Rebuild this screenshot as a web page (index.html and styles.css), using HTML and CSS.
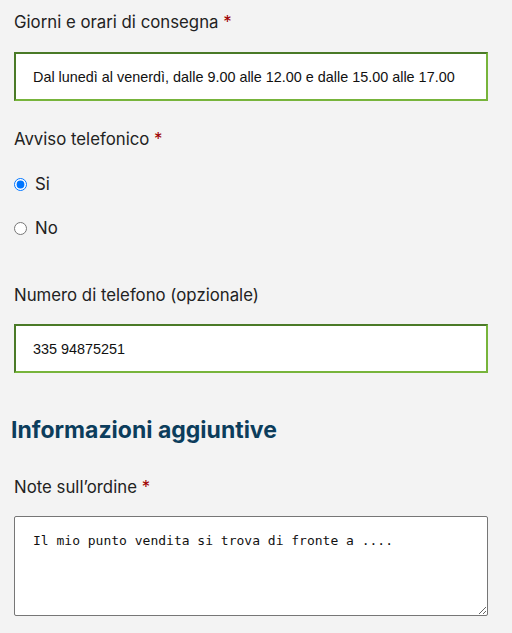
FILE: index.html
```html
<!DOCTYPE html>
<html lang="it">
<head>
<meta charset="utf-8">
<title>Checkout</title>
<link rel="stylesheet" href="styles.css">
</head>
<body>
<form class="form">
  <label class="label label-first" for="orari">Giorni e orari di consegna <span class="req">*</span></label>
  <input class="field field-orari" id="orari" type="text" value="Dal lunedì al venerdì, dalle 9.00 alle 12.00 e dalle 15.00 alle 17.00">

  <div class="label label-avviso">Avviso telefonico <span class="req">*</span></div>
  <label class="radio radio-si"><input type="radio" name="avviso" checked> <span>Si</span></label>
  <label class="radio radio-no"><input type="radio" name="avviso"> <span>No</span></label>

  <label class="label label-tel" for="tel">Numero di telefono (opzionale)</label>
  <input class="field field-tel" id="tel" type="text" value="335 94875251">

  <h2 class="heading">Informazioni aggiuntive</h2>

  <label class="label label-note" for="note">Note sull’ordine <span class="req">*</span></label>
  <textarea class="notes" id="note">Il mio punto vendita si trova di fronte a ....</textarea>
</form>
</body>
</html>
```
FILE: styles.css
```css
html, body {
  margin: 0;
  padding: 0;
  background: #f3f3f3;
}
body {
  font-family: Inter, "Noto Sans", sans-serif;
  color: #222;
}
.form {
  display: flex;
  flex-direction: column;
  padding: 10px 24px 0 14px;
}
.label {
  font-size: 16.8px;
  line-height: 24px;
  color: #222;
}
.req {
  color: #a00000;
}
.field {
  box-sizing: border-box;
  width: 474px;
  height: 49px;
  margin: 0;
  padding: 0 17px;
  border-width: 2px;
  border-style: solid;
  border-top-color: #4a7a27;
  border-left-color: #4a7a27;
  border-right-color: #77b43b;
  border-bottom-color: #77b43b;
  background: #fff;
  font-family: "Liberation Sans", Arial, sans-serif;
  font-size: 14.4px;
  color: #111;
  outline: none;
}
.field-orari { margin-top: 18px; }
.label-avviso { margin-top: 26px; }
.radio {
  display: flex;
  align-items: center;
  gap: 8px;
  height: 24px;
  font-size: 16.8px;
  color: #222;
}
.radio input {
  margin: 0;
  width: 13px;
  height: 13px;
}
.radio-si { margin-top: 21px; }
.radio-no { margin-top: 20px; }
.label-tel { margin-top: 43px; }
.field-tel { margin-top: 17px; }
.heading {
  margin: 41px 0 0 -3px;
  font-size: 23px;
  line-height: 32px;
  font-weight: 700;
  color: #0c3d5c;
}
.label-note { margin-top: 29px; }
.notes {
  box-sizing: border-box;
  width: 474px;
  height: 100px;
  margin: 17px 0 0;
  padding: 16px 18px;
  border: 1px solid #767676;
  border-radius: 2px;
  background: #fff;
  font-family: "DejaVu Sans Mono", monospace;
  font-size: 13px;
  line-height: 16px;
  color: #111;
  resize: vertical;
}
```
